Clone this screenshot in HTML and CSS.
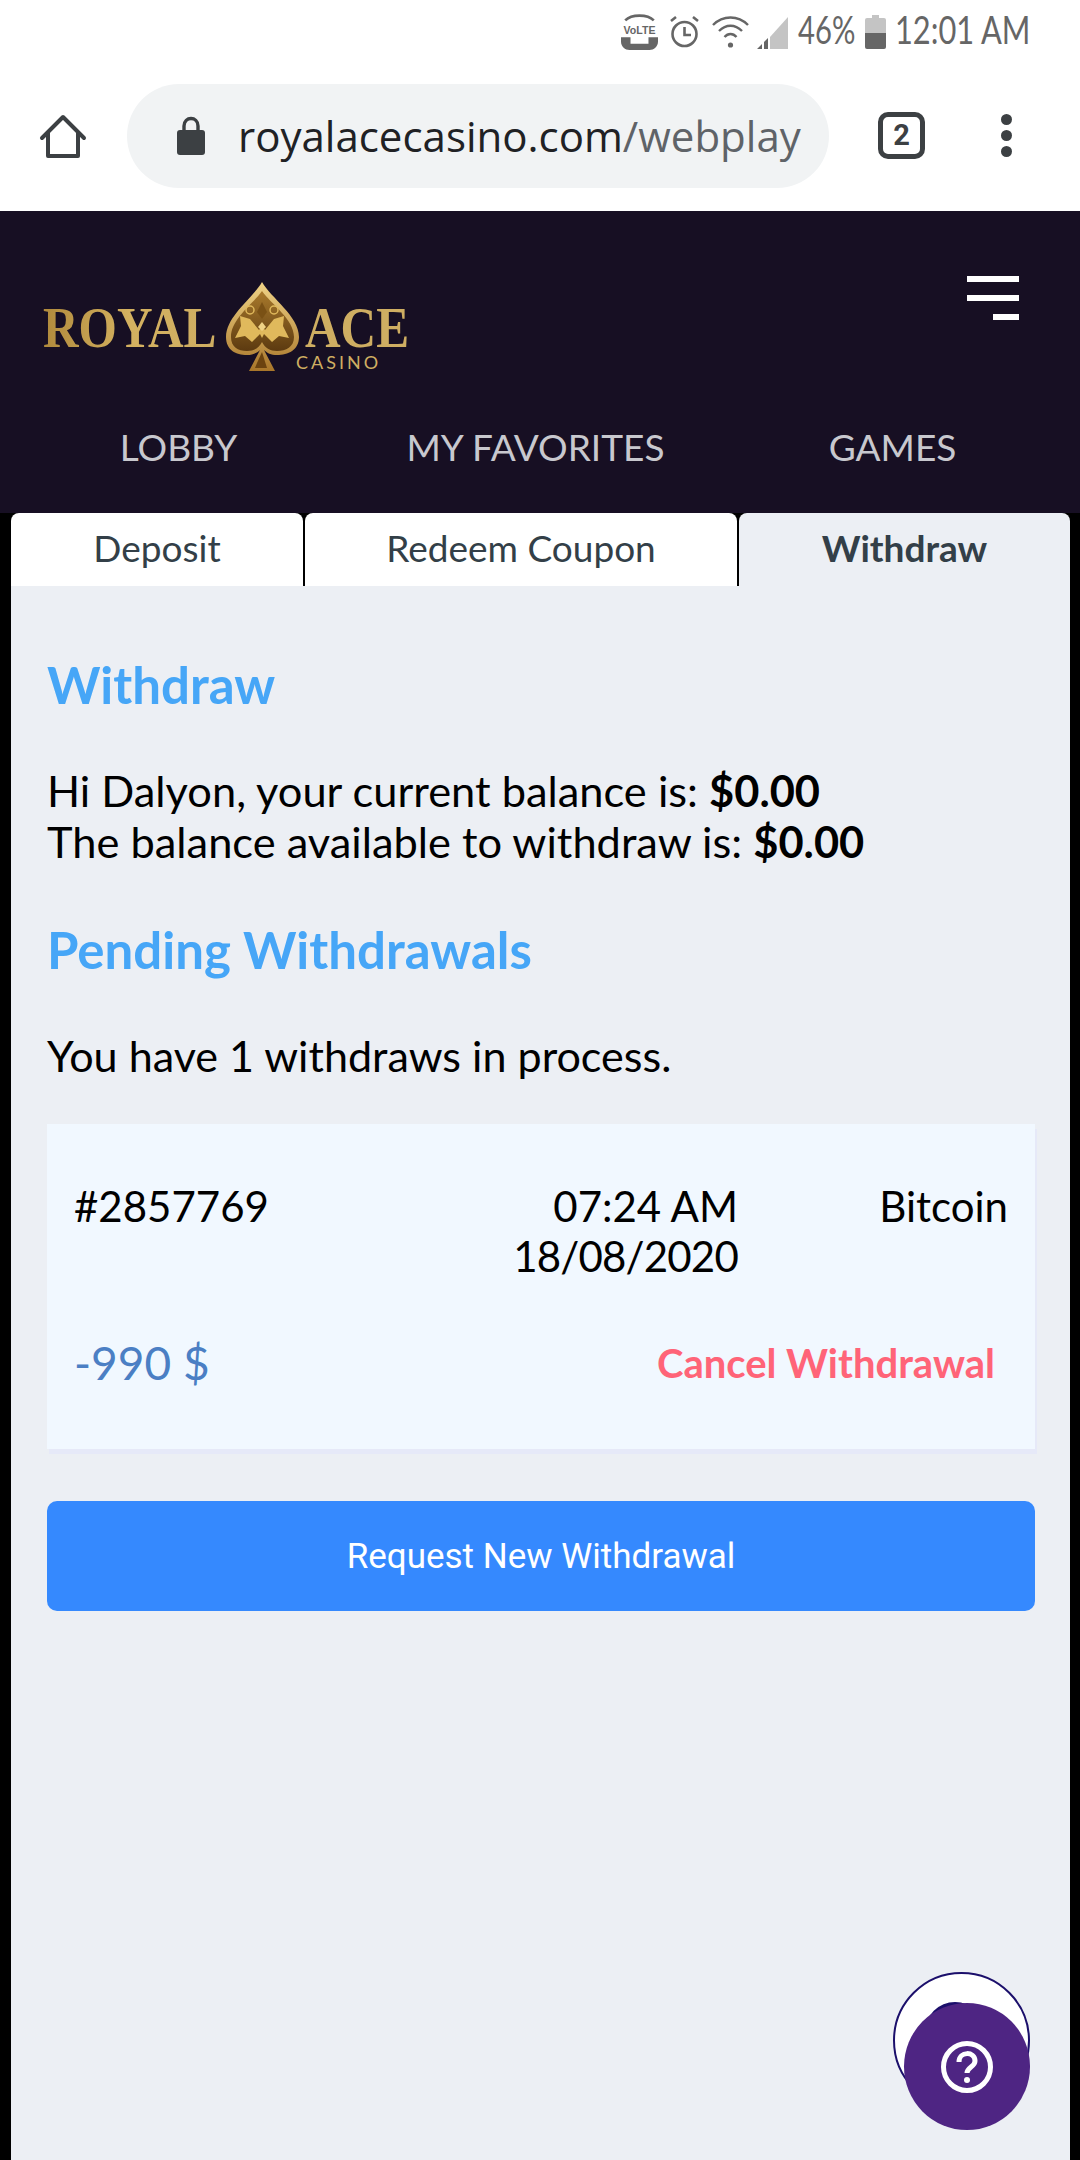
FILE: index.html
```html
<!DOCTYPE html>
<html lang="en">
  <head>
    <meta charset="UTF-8" />
    <meta name="viewport" content="width=device-width, initial-scale=1.0" />
    <title>Royal Ace Casino - Withdraw</title>
    <link rel="stylesheet" href="styles.css">
  </head>
  <body>
    <div class="browser">
      <div class="status-bar">
        <svg class="icon-volte" viewBox="0 0 35 34" width="37" height="36">
          <path d="M4 6 C10 0 25 0 31 6" fill="none" stroke="#666" stroke-width="2.5" />
          <text x="17.5" y="19" text-anchor="middle" class="volte-text">VoLTE</text>
          <path d="M0 22 H9 V28 H26 V22 H35 V26 C35 31 31 34 27 34 H8 C4 34 0 31 0 26 Z" fill="#666" />
        </svg>
        <svg class="icon-alarm" viewBox="0 0 29 34" width="29" height="34">
          <circle cx="14.5" cy="19" r="12" fill="none" stroke="#666" stroke-width="2.6" />
          <path d="M14.5 12 V20 H21" fill="none" stroke="#666" stroke-width="2.6" />
          <path d="M1 6 L6 2 M28 6 L23 2" stroke="#666" stroke-width="2.6" />
        </svg>
        <svg class="icon-wifi" viewBox="0 0 37 34" width="37" height="34">
          <path d="M1 10 C11 0 26 0 36 10" fill="none" stroke="#666" stroke-width="2.4" />
          <path d="M7 16 C14 9 23 9 30 16" fill="none" stroke="#666" stroke-width="2.4" />
          <path d="M12.500 22 C16 18 21 18 24.500 22" fill="none" stroke="#666" stroke-width="2.4" />
          <circle cx="18.500" cy="30" r="2.600" fill="#666" />
        </svg>
        <svg class="icon-signal" viewBox="0 0 31 34" width="31" height="34">
          <path d="M13 34 V22 L31 2 V34 Z" fill="#c4c4c4" />
          <path d="M0 34 L5 29 V34 Z M7 34 V27 L11 23 V34 Z" fill="#666" />
        </svg>
        <svg class="battery-pct" viewBox="0 0 56 44" width="56" height="44">
          <text transform="translate(0 34) scale(0.75 1)" class="status-text">46%</text>
        </svg>
        <svg class="icon-battery" viewBox="0 0 21 34" width="21" height="34">
          <path d="M7 0 H14 V3 H19 Q21 3 21 5 V18 H0 V5 Q0 3 2 3 H7 Z" fill="#c4c4c4" />
          <path d="M0 18 H21 V32 Q21 34 19 34 H2 Q0 34 0 32 Z" fill="#666" />
        </svg>
        <svg class="clock" viewBox="0 0 131 44" width="131" height="44">
          <text transform="translate(0 34) scale(0.79 1)" class="status-text">12:01 AM</text>
        </svg>
      </div>

      <div class="toolbar">
        <svg class="icon-home" viewBox="0 0 48 48" width="48" height="48">
          <path d="M3 26 L24 5 L45 26" fill="none" stroke="#3c4043" stroke-width="4" stroke-linecap="round" stroke-linejoin="round" />
          <path d="M9 21 V44 H39 V21" fill="none" stroke="#3c4043" stroke-width="4" stroke-linejoin="round" />
        </svg>
        <div class="url-pill">
          <svg class="icon-lock" viewBox="0 0 28 38" width="28" height="38">
            <path d="M7 14 V9 C7 -1 21 -1 21 9 V14" fill="none" stroke="#3c4043" stroke-width="3.4" />
            <rect x="0" y="13" width="28" height="25" rx="3" fill="#3c4043" />
          </svg>
          <span class="url"><span class="url-host">royalacecasino.com</span><span class="url-path">/webplay</span></span>
        </div>
        <div class="tab-count">2</div>
        <div class="menu-dots"><i></i><i></i><i></i></div>
      </div>
    </div>

    <header class="site-header">
      <div class="logo-row">
        <svg class="logo" viewBox="0 0 365 90" width="365" height="90">
          <defs>
            <linearGradient id="goldText" x1="0" y1="0" x2="1" y2="0">
              <stop offset="0" stop-color="#b08a3c" />
              <stop offset="0.5" stop-color="#d4b160" />
              <stop offset="1" stop-color="#cfae62" />
            </linearGradient>
            <linearGradient id="goldSpade" x1="0" y1="0" x2="0" y2="1">
              <stop offset="0" stop-color="#f0d386" />
              <stop offset="1" stop-color="#a8762a" />
            </linearGradient>
            <linearGradient id="darkSpade" x1="0" y1="0" x2="0" y2="1">
              <stop offset="0" stop-color="#a97a2c" />
              <stop offset="1" stop-color="#5c3a10" />
            </linearGradient>
          </defs>
          <text transform="translate(0 65) scale(0.85 1)" class="logo-word" fill="url(#goldText)">ROYAL</text>
          <text transform="translate(262 65) scale(0.85 1)" class="logo-word" fill="#cfae62">ACE</text>
          <text x="253" y="87" class="logo-sub">CASINO</text>
          <path d="M219 0 C228 16 256 34 256 55 C256 68 245 73 234 73 C228 73 224 71 221 68 L232 89 H206 L217 68 C214 71 210 73 204 73 C193 73 183 68 183 55 C183 34 210 16 219 0 Z" fill="url(#goldSpade)" />
          <path d="M219 9 C228 22 251 37 251 55 C251 65 243 69 234 69 C227 69 222 66 219 60 C216 66 211 69 204 69 C195 69 188 65 188 55 C188 37 210 22 219 9 Z" fill="url(#darkSpade)" />
          <path d="M214 81 L219 70 L224 86 H212 Z" fill="#6b4310" />
          <path d="M197 34 L207 37 L216 48 L219 44 L222 48 L231 37 L241 34 L240 44 L246 56 L236 54 L229 60 L221 52 L219 56 L217 52 L209 60 L202 54 L192 56 L198 44 Z" fill="#e0b95c" />
          <path d="M219 20 L224 30 L219 37 L214 30 Z" fill="#7a5115" />
          <circle cx="207" cy="28" r="4" fill="none" stroke="#e0b95c" stroke-width="1.500" />
          <circle cx="231" cy="28" r="4" fill="none" stroke="#e0b95c" stroke-width="1.500" />
          <path d="M219 40 L223 45 L219 49 L215 45 Z" fill="#f0d386" />
        </svg>
        <div class="hamburger"><i></i><i></i><i class="short"></i></div>
      </div>
      <nav class="main-nav">
        <a>LOBBY</a>
        <a>MY FAVORITES</a>
        <a>GAMES</a>
      </nav>
    </header>

    <main class="content">
      <div class="tabs">
        <div class="tab tab-deposit">Deposit</div>
        <div class="tab tab-coupon">Redeem Coupon</div>
        <div class="tab tab-withdraw active">Withdraw</div>
      </div>

      <section class="panel">
        <h2 class="first">Withdraw</h2>
        <p class="balance">Hi Dalyon, your current balance is: <b>$0.00</b><br />The balance available to withdraw is: <b>$0.00</b></p>
        <h2 class="pending-title">Pending Withdrawals</h2>
        <p class="pending-count">You have 1 withdraws in process.</p>

        <div class="withdraw-card">
          <div class="card-top">
            <div>#2857769</div>
            <div class="card-date">07:24 AM<br /><span class="date-day">18/08/2020</span></div>
            <div class="card-method">Bitcoin</div>
          </div>
          <div class="card-bottom">
            <span class="amount">-990 $</span>
            <a class="cancel">Cancel Withdrawal</a>
          </div>
        </div>

        <button class="request-btn">Request New Withdrawal</button>
      </section>
    </main>

    <div class="help-back"></div>
    <div class="help-shadow"></div>
    <div class="help-btn">
      <svg viewBox="0 0 52 52" width="52" height="52">
        <circle cx="26" cy="26" r="23.500" fill="none" stroke="#fff" stroke-width="5" />
        <path d="M18 21 C18 10 34 10 34 20 C34 26 26 26 26 32" fill="none" stroke="#fff" stroke-width="5" />
        <circle cx="26" cy="39" r="3" fill="#fff" />
      </svg>
    </div>
  </body>
</html>
```

FILE: styles.css
```css
* {
  box-sizing: border-box;
}

html,
body {
  margin: 0;
  padding: 0;
}

body {
  position: relative;
  display: flex;
  flex-direction: column;
  height: 2160px;
  overflow: hidden;
  background-color: #000;
  font-family: Lato, "Liberation Sans", sans-serif;
  color: #000;
}

svg {
  overflow: visible;
}

/* phone chrome */
.browser {
  height: 211px;
  background-color: #fff;
}

.status-bar {
  display: flex;
  justify-content: flex-end;
  align-items: center;
  height: 64px;
  padding: 0 54px 0 0;
}

.status-bar svg {
  flex: none;
}

.volte-text {
  font-family: "Liberation Sans", sans-serif;
  font-size: 10px;
  font-weight: bold;
  fill: #666;
}

.status-text {
  font-family: Lato, sans-serif;
  font-size: 39px;
  fill: #666;
}

.icon-alarm {
  margin-left: 12px;
}

.icon-wifi {
  margin-left: 13px;
}

.icon-signal {
  margin-left: 8px;
}

.battery-pct {
  margin-left: 10px;
}

.icon-battery {
  margin-left: 11px;
}

.clock {
  margin-left: 9px;
}

.toolbar {
  display: flex;
  align-items: center;
  height: 147px;
  padding-bottom: 4px;
}

.icon-home {
  margin-left: 39px;
  flex: none;
}

.url-pill {
  display: flex;
  align-items: center;
  width: 702px;
  height: 104px;
  margin-left: 40px;
  padding-left: 50px;
  background-color: #f1f3f4;
  border-radius: 52px;
}

.url {
  margin-left: 33px;
  font-family: "Open Sans", sans-serif;
  font-size: 42px;
  white-space: nowrap;
}

.url-host {
  color: #202124;
}

.url-path {
  color: #5f6368;
}

.tab-count {
  width: 47px;
  height: 47px;
  margin-left: 49px;
  border: 5px solid #3c4043;
  border-radius: 10px;
  color: #3c4043;
  font-family: Roboto, sans-serif;
  font-size: 29px;
  font-weight: bold;
  line-height: 37px;
  text-align: center;
}

.menu-dots {
  display: flex;
  flex-direction: column;
  gap: 5px;
  margin-left: 76px;
}

.menu-dots i {
  width: 11px;
  height: 11px;
  background-color: #3c4043;
  border-radius: 50%;
}

/* site header */
.site-header {
  height: 302px;
  background-color: #170f23;
}

.logo-row {
  display: flex;
  justify-content: space-between;
  align-items: flex-start;
  height: 200px;
  padding: 71px 61px 0 43px;
}

.logo-word {
  font-family: "Liberation Serif", serif;
  font-size: 58px;
  font-weight: bold;
}

.logo-sub {
  font-family: Lato, sans-serif;
  font-size: 18px;
  letter-spacing: 3px;
  fill: #cfae62;
}

.hamburger {
  display: flex;
  flex-direction: column;
  align-items: flex-end;
  gap: 13px;
  width: 52px;
  margin-top: -6px;
}

.hamburger i {
  width: 100%;
  height: 6px;
  background-color: #fff;
}

.hamburger .short {
  width: 26px;
}

.main-nav {
  display: grid;
  grid-template-columns: repeat(3, 357px);
  margin-top: 14px;
  color: #c8c8ce;
  font-size: 37px;
  line-height: 44px;
  text-align: center;
}

/* tabs + panel */
.content {
  display: flex;
  flex-direction: column;
  flex: 1;
  margin: 0 10px 0 11px;
}

.tabs {
  display: flex;
  gap: 2px;
  height: 73px;
}

.tab {
  background-color: #fff;
  border-radius: 8px 8px 0 0;
  color: #333f48;
  font-size: 37px;
  line-height: 70px;
  text-align: center;
}

.tab-deposit {
  width: 292px;
}

.tab-coupon {
  width: 432px;
}

.tab-withdraw {
  flex: 1;
}

.tab.active {
  background-color: #eceff4;
  font-weight: bold;
}

.panel {
  flex: 1;
  padding: 69px 35px 0 36px;
  background-color: #eceff4;
}

h2 {
  margin: 0;
  color: #46a6f7;
  font-size: 51px;
  font-weight: bold;
  line-height: 60px;
}

.panel p {
  margin: 0;
  font-size: 43.1px;
  line-height: 51px;
}

.panel .balance {
  margin-top: 50px;
  font-size: 43.4px;
}

.pending-title {
  margin-top: 53px;
}

.panel .pending-count {
  margin-top: 50px;
}

.withdraw-card {
  height: 325px;
  margin-top: 43px;
  padding: 57px 27px 0 27px;
  background-color: #f1f8ff;
  box-shadow: 2px 5px 0 #e6e9f8;
  font-size: 42px;
  line-height: 50px;
}

.card-top {
  display: grid;
  grid-template-columns: 1fr 1fr 270px;
}

.card-date,
.card-method {
  text-align: right;
}

.date-day {
  letter-spacing: -0.8px;
}

.card-bottom {
  display: flex;
  justify-content: space-between;
  align-items: center;
  margin-top: 57px;
}

.amount {
  color: #4b7fc4;
  font-size: 46px;
}

.cancel {
  margin-right: 13px;
  color: #ff6478;
  font-size: 40px;
  font-weight: bold;
}

.request-btn {
  display: block;
  width: 100%;
  height: 110px;
  margin-top: 52px;
  padding: 0;
  border: none;
  border-radius: 10px;
  background-color: #3589fe;
  color: #fff;
  font-family: Roboto, sans-serif;
  font-size: 35px;
}

/* help bubble sits over the page */
.help-back {
  position: absolute;
  left: 893px;
  top: 1972px;
  width: 137px;
  height: 137px;
  background-color: #fff;
  border: 2px solid #1b0f6b;
  border-radius: 50%;
}

.help-shadow {
  position: absolute;
  left: 925px;
  top: 2002px;
  width: 60px;
  height: 60px;
  background-color: #1b0f6b;
  border-radius: 50%;
}

.help-btn {
  position: absolute;
  left: 904px;
  top: 2003px;
  display: flex;
  justify-content: center;
  align-items: center;
  width: 126px;
  height: 127px;
  background-color: #4e2583;
  border-radius: 50%;
}
```
